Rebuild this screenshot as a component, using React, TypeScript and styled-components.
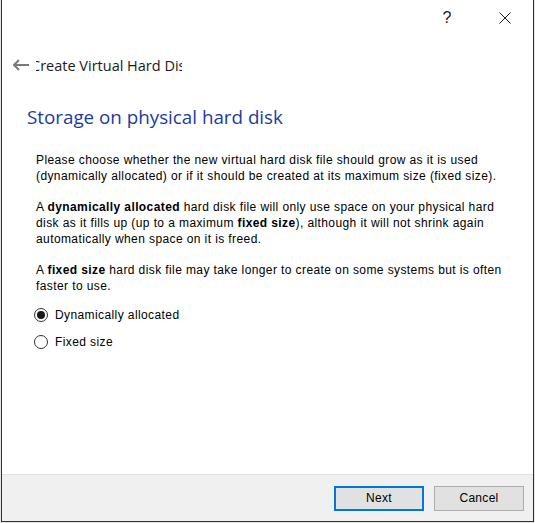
import React, { FC } from "react";
import styled, { createGlobalStyle } from "styled-components";

const GlobalStyle = createGlobalStyle`
  html, body {
    margin: 0;
    padding: 0;
    background: #d9d9d9;
  }
  #root {
    width: 535px;
    height: 523px;
  }
`;

const App: FC = () => {
  return (
    <>
      <GlobalStyle />
      <Frame>
        <Window>
          <TitleBar>
            <TitleButton>?</TitleButton>
            <TitleButton>
              <svg width="12" height="12" viewBox="0 0 12 12">
                <path d="M0.5 0.5 L11.5 11.5 M11.5 0.5 L0.5 11.5" stroke="#1a1a1a" strokeWidth="1" />
              </svg>
            </TitleButton>
          </TitleBar>

          <NavRow>
            <BackArrow>
              <svg width="16" height="12" viewBox="0 0 16 12">
                <path d="M1 6 H16 M6 1 L1 6 L6 11" stroke="#7a7a7a" strokeWidth="2" fill="none" />
              </svg>
            </BackArrow>
            <WizardTitleClip>
              <WizardTitle>Create Virtual Hard Disk</WizardTitle>
            </WizardTitleClip>
          </NavRow>

          <Heading>Storage on physical hard disk</Heading>

          <Body>
            <Paragraph>
              Please choose whether the new virtual hard disk file should grow as it is used
              <br />
              (dynamically allocated) or if it should be created at its maximum size (fixed size).
            </Paragraph>
            <Paragraph>
              A <b>dynamically allocated</b> hard disk file will only use space on your physical hard
              <br />
              disk as it fills up (up to a maximum <b>fixed size</b>), although it will not shrink again
              <br />
              automatically when space on it is freed.
            </Paragraph>
            <Paragraph>
              A <b>fixed size</b> hard disk file may take longer to create on some systems but is often
              <br />
              faster to use.
            </Paragraph>

            <RadioGroup>
              <RadioRow>
                <RadioCircle $checked />
                <RadioLabel>Dynamically allocated</RadioLabel>
              </RadioRow>
              <RadioRow>
                <RadioCircle />
                <RadioLabel>Fixed size</RadioLabel>
              </RadioRow>
            </RadioGroup>
          </Body>

          <Footer>
            <Button $default>Next</Button>
            <Button>Cancel</Button>
          </Footer>
        </Window>
      </Frame>
    </>
  );
};

export default App;

const Frame = styled.div`
  width: 535px;
  height: 523px;
  padding-left: 1px;
  box-sizing: border-box;
  background: #e6e6e6;
`;

const Window = styled.div`
  width: 533px;
  height: 522px;
  box-sizing: border-box;
  border-left: 1px solid #2e2e2e;
  border-right: 1px solid #2e2e2e;
  border-bottom: 1px solid #2e2e2e;
  background: #ffffff;
  display: flex;
  flex-direction: column;
  font-family: "Liberation Sans", Arial, sans-serif;
  color: #000;
`;

const TitleBar = styled.div`
  height: 36px;
  display: flex;
  justify-content: flex-end;
  align-items: center;
  padding-right: 16px;
  gap: 34px;
`;

const TitleButton = styled.div`
  width: 24px;
  height: 24px;
  display: flex;
  align-items: center;
  justify-content: center;
  font-family: "Liberation Sans", Arial, sans-serif;
  font-size: 16px;
  color: #1a1a1a;
`;

const NavRow = styled.div`
  height: 22px;
  margin-top: 18px;
  display: flex;
  align-items: center;
  padding-left: 11px;
`;

const BackArrow = styled.div`
  width: 16px;
  height: 12px;
  display: flex;
`;

const WizardTitleClip = styled.div`
  margin-left: 7px;
  width: 146px;
  overflow: hidden;
  white-space: nowrap;
`;

const WizardTitle = styled.span`
  display: inline-block;
  margin-left: -5px;
  font-family: "Open Sans", "Noto Sans", sans-serif;
  font-size: 14.5px;
  color: #1a1a1a;
`;

const Heading = styled.div`
  margin: 28px 0 0 25px;
  font-family: "Open Sans", "Noto Sans", sans-serif;
  font-size: 18.8px;
  color: #1c3b9c;
  line-height: 26px;
`;

const Body = styled.div`
  padding: 22px 20px 0 34px;
  flex: 1;
  font-family: "Liberation Sans", Arial, sans-serif;
  font-size: 12px;
  letter-spacing: 0.4px;
  line-height: 16px;
  white-space: nowrap;
`;

const Paragraph = styled.p`
  margin: 0 0 15px 0;
`;

const RadioGroup = styled.div`
  display: flex;
  flex-direction: column;
  gap: 11px;
  margin-left: -2px;
  margin-top: -2px;
`;

const RadioRow = styled.div`
  display: flex;
  align-items: center;
  height: 16px;
`;

const RadioCircle = styled.span<{ $checked?: boolean }>`
  width: 14px;
  height: 14px;
  border-radius: 50%;
  border: 1px solid #333;
  box-sizing: border-box;
  position: relative;
  background: #fff;

  &::after {
    content: "";
    display: ${p => (p.$checked ? "block" : "none")};
    position: absolute;
    left: 2px;
    top: 2px;
    width: 8px;
    height: 8px;
    border-radius: 50%;
    background: #1a1a1a;
  }
`;

const RadioLabel = styled.span`
  margin-left: 7px;
`;

const Footer = styled.div`
  height: 46px;
  border-top: 1px solid #dfdfdf;
  background: #f0f0f0;
  display: flex;
  justify-content: flex-end;
  align-items: center;
  gap: 10px;
  padding-right: 9px;
`;

const Button = styled.div<{ $default?: boolean }>`
  width: 90px;
  height: 25px;
  box-sizing: border-box;
  border: ${p => (p.$default ? "2px solid #0078d7" : "1px solid #adadad")};
  background: #e1e1e1;
  display: flex;
  align-items: center;
  justify-content: center;
  font-family: "Liberation Sans", Arial, sans-serif;
  font-size: 12px;
  letter-spacing: 0.3px;
  color: #000;
`;
